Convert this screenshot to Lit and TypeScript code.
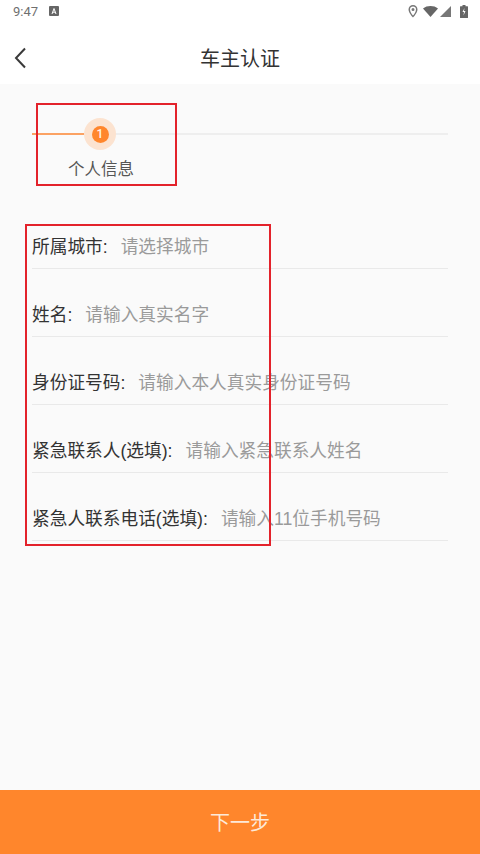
import { LitElement, html, css } from "lit";
import { customElement } from "lit/decorators.js";

const rows = [
  ["所属城市:", "请选择城市"],
  ["姓名:", "请输入真实名字"],
  ["身份证号码:", "请输入本人真实身份证号码"],
  ["紧急联系人(选填):", "请输入紧急联系人姓名"],
  ["紧急人联系电话(选填):", "请输入11位手机号码"],
];

@customElement("app-root")
export class AppRoot extends LitElement {
  static styles = css`
    :host {
      display: flex;
      flex-direction: column;
      position: relative;
      width: 480px;
      height: 854px;
      overflow: hidden;
      background: #fafafa;
      font-family: "Liberation Sans", "Noto Sans CJK SC", sans-serif;
      color: #333;
    }
    .top { background: #fff; height: 84px; flex: none; display: flex; flex-direction: column; }
    .status { height: 24px; display: flex; align-items: center; padding: 0 12px 2px 13px; box-sizing: border-box; color: #6f6f6f; font-size: 13px; font-family: Roboto, sans-serif; }
    .status .time { margin-right: 11px; }
    .status .right { margin-left: auto; display: flex; align-items: center; gap: 5px; }
    .status svg { display: block; }
    .nav { flex: 1; position: relative; display: flex; align-items: center; justify-content: center; font-size: 20px; color: #333; padding-top: 7px; }
    .back { position: absolute; left: 13px; top: 23px; }
    .main { flex: 1; display: flex; flex-direction: column; padding: 0 32px; }
    .stepper { position: relative; height: 117px; flex: none; }
    .line { position: absolute; left: 0; right: 0; top: 49px; height: 2px; background: #eeeeee; }
    .line-on { position: absolute; left: 0; width: 54px; top: 49px; height: 2px; background: #fba263; }
    .halo { position: absolute; left: 52px; top: 34px; width: 32px; height: 32px; border-radius: 50%; background: #fce3d0; display: flex; align-items: center; justify-content: center; }
    .dot { width: 17px; height: 17px; border-radius: 50%; background: #ff862c; color: #fff3e9; font-size: 12px; font-weight: 500; line-height: 17px; text-align: center; font-family: Roboto, sans-serif; }
    .step-label { position: absolute; left: 36px; width: 66px; top: 73px; font-size: 16.5px; line-height: 24px; white-space: nowrap; color: #555; text-align: center; }
    .form { display: flex; flex-direction: column; }
    .row { height: 68px; box-sizing: border-box; border-bottom: 1px solid #e9e9e9; display: flex; align-items: center; font-size: 17.7px; white-space: nowrap; padding-top: 20px; }
    .row .k { color: #333; margin-right: 13px; }
    .row .v { color: #9a9a9a; }
    .submit { height: 64px; flex: none; background: #ff862c; color: #fde9d8; font-size: 20px; padding-bottom: 2px; box-sizing: border-box; display: flex; align-items: center; justify-content: center; }
    .mark { position: absolute; border: 2px solid #e3222b; box-sizing: border-box; pointer-events: none; }
    .m1 { left: 36px; top: 103px; width: 141px; height: 83px; }
    .m2 { left: 25px; top: 224px; width: 246px; height: 322px; }
  `;

  render() {
    return html`
      <div class="top">
        <div class="status">
          <span class="time">9:47</span>
          <svg width="10" height="10" viewBox="0 0 10 10"><rect width="10" height="10" rx="1" fill="#666"/><path d="M3 8 5 2.500 7 8M3.800 6.200h2.400" stroke="#fff" stroke-width="1" fill="none"/></svg>
          <div class="right">
            <svg width="10" height="14" viewBox="0 0 10 14"><path fill-rule="evenodd" fill="#777" d="M5 1a4.500 4.500 0 0 0-4.500 4.500C.5 9 5 13.500 5 13.500S9.500 9 9.500 5.500A4.500 4.500 0 0 0 5 1Zm0 1.500a3 3 0 0 1 3 3C8 7.500 6 10.500 5 11.500 4 10.500 2 7.500 2 5.500a3 3 0 0 1 3-3Zm0 1.500a1.500 1.500 0 1 0 0 3 1.500 1.500 0 0 0 0-3Z"/></svg>
            <svg width="15" height="11" viewBox="0 0 15 11"><path fill="#666" d="M0 2.500C2 .8 4.700 0 7.500 0S13 .8 15 2.500L7.500 11Z"/></svg>
            <svg width="11" height="11" viewBox="0 0 11 11" style="margin-left:-3px"><path fill="#777" d="M11 0V11H0Z"/></svg>
            <svg width="8" height="13" viewBox="0 0 8 13" style="margin-left:4px"><path fill="#666" d="M2.500 0h3v1.200H7.500a.5.5 0 0 1 .5.5V12.500a.5.5 0 0 1-.5.5H.5a.5.500 0 0 1-.5-.5V1.700a.5.500 0 0 1 .5-.5H2.500Z"/><path fill="#fff" d="M4.500 3 2.500 7H4L3.500 10.500 5.500 6H4Z"/></svg>
          </div>
        </div>
        <div class="nav">
          车主认证
          <svg class="back" width="14" height="22" viewBox="0 0 14 22"><path d="M12 1.500 3 11l9 9.500" fill="none" stroke="#3a3a3a" stroke-width="2"/></svg>
        </div>
      </div>
      <div class="main">
        <div class="stepper">
          <div class="line"></div>
          <div class="line-on"></div>
          <div class="halo"><div class="dot">1</div></div>
          <div class="step-label">个人信息</div>
        </div>
        <div class="form">
          ${rows.map(([k, v]) => html`<div class="row"><span class="k">${k}</span><span class="v">${v}</span></div>`)}
        </div>
      </div>
      <div class="submit">下一步</div>
      <div class="mark m1"></div>
      <div class="mark m2"></div>
    `;
  }
}
